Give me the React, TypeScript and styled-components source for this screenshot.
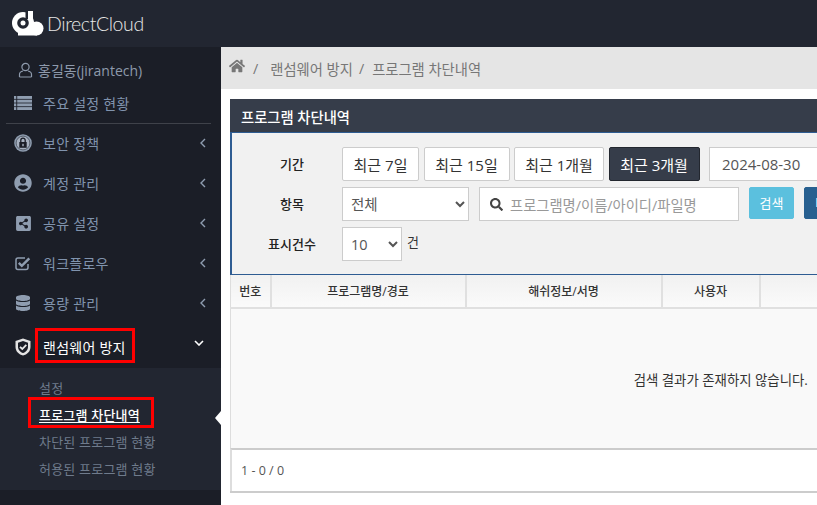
import React from "react";
import styled, { createGlobalStyle } from "styled-components";
import { FaHome, FaUserCircle, FaShareAltSquare, FaDatabase, FaSearch } from "react-icons/fa";

const Global = createGlobalStyle`
  html, body { margin: 0; padding: 0; height: 505px; overflow: hidden; background: #fff; }
  body { font-family: "Open Sans", "Noto Sans CJK KR", sans-serif; font-size: 13px; color: #333; }
  * { box-sizing: border-box; }
`;
const Page = styled.div`width: 817px; height: 505px; overflow: hidden; display: flex; flex-direction: column; position: relative;`;
const TopBar = styled.header`height: 47px; flex: none; background: #222631; display: flex; align-items: center; padding: 0 0 0 12px;`;
const LogoText = styled.span`font-family: "Lato", sans-serif; font-weight: 300; font-size: 19.500px; letter-spacing: -0.4px; color: #e6e6e6; margin-left: 3px;`;
const Main = styled.div`flex: 1; display: flex; min-height: 0;`;
const Side = styled.nav`width: 221px; flex: none; background: #1b1e27; position: relative; overflow: hidden;`;
const UserRow = styled.div`height: 41px; display: flex; align-items: center; padding: 5px 0 0 18px; gap: 5px; color: #8e9aac; font-size: 14px;`;
const Item = styled.div<{ $h?: number; $active?: boolean; $pt?: number; $pb?: number }>`
  height: ${p => p.$h ?? 40}px; flex: none; display: flex; align-items: center;
  padding: ${p => p.$pt ?? 0}px 15px ${p => p.$pb ?? 2}px 14px;
  color: ${p => (p.$active ? "#fff" : "#8093ad")}; font-size: 14px; letter-spacing: 0.25px;
`;
const Ico = styled.span`width: 18px; height: 18px; margin-right: 11px; display: flex; align-items: center; justify-content: center; color: #8f9db0; font-size: 18px;`;
const Label = styled.span`flex: 1;`;
const Divider = styled.div`height: 1px; background: #3f424a; margin: 0 10px 0 6px;`;
const Sub = styled.div`background: #222631; height: 122px; padding-top: 7px;`;
const SubItem = styled.div<{ $active?: boolean }>`
  height: 27px; line-height: 27px; padding-left: 39px; font-size: 13px; color: ${p => (p.$active ? "#fff" : "#6f7b8c")};
  font-weight: ${p => (p.$active ? 500 : 400)}; letter-spacing: 0.2px;
  text-decoration: ${p => (p.$active ? "underline" : "none")}; text-underline-offset: 2px;
`;
const DownWrap = styled.span`display: flex; margin: -8px 2px 0 0;`;
const Caret = styled.div`position: absolute; right: 0; top: 364px; width: 0; height: 0; border: 7px solid transparent; border-right-color: #fff; border-left-width: 0; border-right-width: 6px;`;
const RedBox = styled.div<{ $l: number; $t: number; $w: number; $h: number }>`position: absolute; left: ${p => p.$l}px; top: ${p => p.$t}px; width: ${p => p.$w}px; height: ${p => p.$h}px; border: 3px solid #f00; pointer-events: none;`;
const Content = styled.main`flex: 1; min-width: 0; overflow: hidden;`;
const Crumbs = styled.div`height: 42px; background: #e5e5e5; display: flex; align-items: center; padding-left: 8px; color: #777; font-size: 14.300px; white-space: nowrap;`;
const Sep = styled.span<{ $l: number; $r: number }>`margin: 0 ${p => p.$r}px 0 ${p => p.$l}px;`;
const HomeIco = styled.span`display: flex; margin-top: -4px;`;
const Panel = styled.section`width: 982px; margin: 10px 0 0 9px; border-bottom: 2px solid #ccc;`;
const PanelHead = styled.div`height: 34px; background: #363d4a; color: #fff; font-size: 14.300px; font-weight: 500; padding: 1px 11px 0; display: flex; align-items: center; border-bottom: 1px solid #2e5c92;`;
const Filter = styled.div`height: 142px; background: #f1f1f1; border-left: 2px solid #2e5c92; border-bottom: 1px solid #2e5c92; padding: 14px 0 0 12px; display: grid; grid-template-columns: 96px 1fr; column-gap: 2px; grid-auto-rows: 34px; row-gap: 6px;`;
const RowLabel = styled.div`font-size: 13px; font-weight: 500; color: #222; display: flex; align-items: center; justify-content: center; padding-bottom: 2px;`;
const Controls = styled.div`display: flex; align-items: center; height: 34px; white-space: nowrap;`;
const RangeGroup = styled.div`display: flex; gap: 4.500px;`;
const RangeBtn = styled.button<{ $on?: boolean; $w: number }>`
  width: ${p => p.$w}px; height: 34px; padding: 0; font: inherit; font-size: 15px; border-radius: 2px;
  background: ${p => (p.$on ? "#363d4a" : "#fff")}; color: ${p => (p.$on ? "#fff" : "#333")};
  border: 1px solid ${p => (p.$on ? "#23272f" : "#ccc")};
`;
const DateInput = styled.div`width: 160px; height: 34px; margin-left: 9.500px; background: #fff; border: 1px solid #ccc; color: #555; font-size: 15px; display: flex; align-items: center; padding-left: 12px; flex: none;`;
const Select = styled.select<{ $w: number }>`width: ${p => p.$w}px; height: 34px; background: #fff; border: 1px solid #ccc; border-radius: 0; color: #555; font: inherit; font-size: 14.500px; padding: 0 0 0 4px; flex: none; outline: none;`;
const SearchBox = styled.div`width: 260px; height: 34px; margin-left: 10px; background: #fff; border: 1px solid #ccc; color: #999; font-size: 14.300px; display: flex; align-items: center; gap: 7px; padding-left: 10px; flex: none;`;
const ActionBtn = styled.button<{ $bg: string; $dark?: boolean }>`width: 45px; height: 32px; padding: 0 0 0 ${p => (p.$dark ? 10 : 0)}px; text-align: ${p => (p.$dark ? "left" : "center")}; margin: -3px 0 0 10px; font: inherit; font-size: 13px; color: #fff; background: ${p => p.$bg}; border: 1px solid ${p => p.$bg}; border-radius: 2px; flex: none;`;
const Unit = styled.span`font-size: 13px; color: #333; margin: -5px 0 0 5px;`;
const Table = styled.table`width: 100%; border-collapse: collapse; table-layout: fixed; border-left: 1px solid #ddd;`;
const Th = styled.th`height: 33px; font-size: 12px; font-weight: 500; color: #333; background: linear-gradient(#f1f1f1, #fafafa); border-right: 2px solid #e0e0e0; border-bottom: 2px solid #e0e0e0; padding: 0;`;
const Td = styled.td`height: 140px; background: #f9f9f9; text-align: center; font-size: 13.400px; color: #333; padding: 0 2px 0 0;`;
const Foot = styled.div`height: 43px; background: #fff; border-top: 2px solid #ccc; border-left: 2px solid #ddd; padding-left: 9px; display: flex; align-items: center; font-size: 12.500px; color: #555;`;

const Logo = () => (
  <svg width="32" height="25" viewBox="0 0 32 25" fill="#fff">
    <circle cx="11" cy="12" r="11" />
    <rect x="16" y="0" width="5" height="14" />
    <circle cx="24.500" cy="17.500" r="7" />
    <rect x="6" y="16" width="19" height="8.500" />
    <circle cx="11" cy="12" r="5.800" fill="#222631" />
    <rect x="13.500" y="0" width="2.500" height="8" fill="#222631" />
    <circle cx="11" cy="12" r="2.500" />
  </svg>
);
const UserIcon = () => (
  <svg width="15" height="16" viewBox="0 0 15 16" fill="none" stroke="#8e9aac" strokeWidth="1.200">
    <circle cx="7.500" cy="5" r="3.600" />
    <path d="M1.500 15 V12.500 C1.500 10.500 3.500 9.300 5 9 M13.500 15 V12.500 C13.500 10.500 11.500 9.300 10 9 M1.500 15 H13.500" />
  </svg>
);
const ListIcon = () => (
  <svg width="18" height="14" viewBox="0 0 18 14" fill="#8f9db0">
    {[0, 3.700, 7.400, 11.100].map(y => (
      <g key={y}>
        <rect x="0" y={y} width="2.300" height="2.900" />
        <rect x="3.200" y={y} width="14.800" height="2.900" />
      </g>
    ))}
  </svg>
);
const LockCircle = () => (
  <svg width="18" height="18" viewBox="0 0 18 18">
    <circle cx="9" cy="9" r="8.800" fill="#8f9db0" />
    <circle cx="9" cy="9" r="6.900" fill="#a6b0bf" stroke="#3a404c" strokeWidth="0.700" />
    <path d="M5.300 8 H12.700 V13.800 H5.300 Z" fill="#1b1e27" />
    <path d="M6.800 8 V6.300 a2.200 2.200 0 0 1 4.400 0 V8" fill="none" stroke="#1b1e27" strokeWidth="1.300" />
    <rect x="8.300" y="9.800" width="1.400" height="2.400" fill="#a6b0bf" />
  </svg>
);
const CheckSquare = () => (
  <svg width="16" height="15" viewBox="0 0 16 15" fill="none">
    <path d="M13 8 V11.500 a2 2 0 0 1 -2 2 H3 a2 2 0 0 1 -2 -2 V4 a2 2 0 0 1 2 -2 H10" stroke="#8f9db0" strokeWidth="1.500" />
    <path d="M3.800 6.800 L6.800 9.800 L14.300 2.300" stroke="#8f9db0" strokeWidth="2.500" />
  </svg>
);
const Shield = () => (
  <svg width="16" height="18" viewBox="0 0 16 18">
    <path d="M8 .5 L15.500 3 V9 C15.500 13.500 12 16.500 8 17.500 C4 16.500 .5 13.500 .5 9 V3 Z" fill="#e4e4e4" />
    <path d="M8 3 L13 4.700 V9 C13 12 10.500 14.200 8 15 C5.500 14.200 3 12 3 9 V4.700 Z" fill="#1b1e27" />
    <path d="M5 8.800 L7.300 11 L11.300 6.800" fill="none" stroke="#e8e8e8" strokeWidth="1.800" />
  </svg>
);
const ChevLeft = () => (
  <svg width="6" height="10" viewBox="0 0 6 10" fill="none" stroke="#8f9db0" strokeWidth="1.400"><path d="M5 1 L1 5 L5 9" /></svg>
);
const ChevDown = () => (
  <svg width="10" height="6" viewBox="0 0 10 6" fill="none" stroke="#fff" strokeWidth="1.600"><path d="M1 1 L5 5 L9 1" /></svg>
);

const menu = [
  { label: "보안 정책", icon: <LockCircle /> },
  { label: "계정 관리", icon: <FaUserCircle /> },
  { label: "공유 설정", icon: <FaShareAltSquare size={17} /> },
  { label: "워크플로우", icon: <CheckSquare /> },
  { label: "용량 관리", icon: <FaDatabase size={16} /> },
];
const cols = [
  { t: "번호", w: 40 }, { t: "프로그램명/경로", w: 195 }, { t: "해쉬정보/서명", w: 196 },
  { t: "사용자", w: 98 }, { t: "컴퓨터", w: 453 },
];

export default function App() {
  return (
    <Page>
      <Global />
      <TopBar><Logo /><LogoText>DirectCloud</LogoText></TopBar>
      <Main>
        <Side>
          <UserRow><UserIcon />홍길동(jirantech)</UserRow>
          <Item $h={35} $pb={5}><Ico><ListIcon /></Ico><Label>주요 설정 현황</Label></Item>
          <Divider />
          {menu.map(m => (
            <Item key={m.label}><Ico>{m.icon}</Ico><Label>{m.label}</Label><ChevLeft /></Item>
          ))}
          <Item $h={44} $active $pt={2} $pb={0}><Ico><Shield /></Ico><Label>랜섬웨어 방지</Label><DownWrap><ChevDown /></DownWrap></Item>
          <Sub>
            <SubItem>설정</SubItem>
            <SubItem $active>프로그램 차단내역</SubItem>
            <SubItem>차단된 프로그램 현황</SubItem>
            <SubItem>허용된 프로그램 현황</SubItem>
          </Sub>
          <Item $pt={8} $pb={0}><Ico><FaDatabase size={16} /></Ico><Label>감사 로그</Label><ChevLeft /></Item>
          <Caret />
          <RedBox $l={35} $t={281} $w={100} $h={35} />
          <RedBox $l={28} $t={350} $w={126} $h={31} />
        </Side>
        <Content>
          <Crumbs><HomeIco><FaHome size={16} /></HomeIco><Sep $l={8} $r={12}>/</Sep>랜섬웨어 방지<Sep $l={6} $r={8}>/</Sep>프로그램 차단내역</Crumbs>
          <Panel>
            <PanelHead>프로그램 차단내역</PanelHead>
            <Filter>
              <RowLabel>기간</RowLabel>
              <Controls>
                <RangeGroup>
                  <RangeBtn $w={77}>최근 7일</RangeBtn>
                  <RangeBtn $w={86}>최근 15일</RangeBtn>
                  <RangeBtn $w={90}>최근 1개월</RangeBtn>
                  <RangeBtn $w={91} $on>최근 3개월</RangeBtn>
                </RangeGroup>
                <DateInput>2024-08-30</DateInput>
              </Controls>
              <RowLabel>항목</RowLabel>
              <Controls>
                <Select $w={127} defaultValue="전체"><option>전체</option></Select>
                <SearchBox><FaSearch size={13} color="#444" />프로그램명/이름/아이디/파일명</SearchBox>
                <ActionBtn $bg="#5bc0de">검색</ActionBtn>
                <ActionBtn $bg="#286090" $dark>티</ActionBtn>
              </Controls>
              <RowLabel>표시건수</RowLabel>
              <Controls>
                <Select $w={60} defaultValue="10"><option>10</option></Select>
                <Unit>건</Unit>
              </Controls>
            </Filter>
            <Table>
              <colgroup>{cols.map(c => <col key={c.t} style={{ width: c.w }} />)}</colgroup>
              <thead><tr>{cols.map(c => <Th key={c.t}>{c.t}</Th>)}</tr></thead>
              <tbody><tr><Td colSpan={5}>검색 결과가 존재하지 않습니다.</Td></tr></tbody>
            </Table>
            <Foot>1 - 0 / 0</Foot>
          </Panel>
        </Content>
      </Main>
    </Page>
  );
}
